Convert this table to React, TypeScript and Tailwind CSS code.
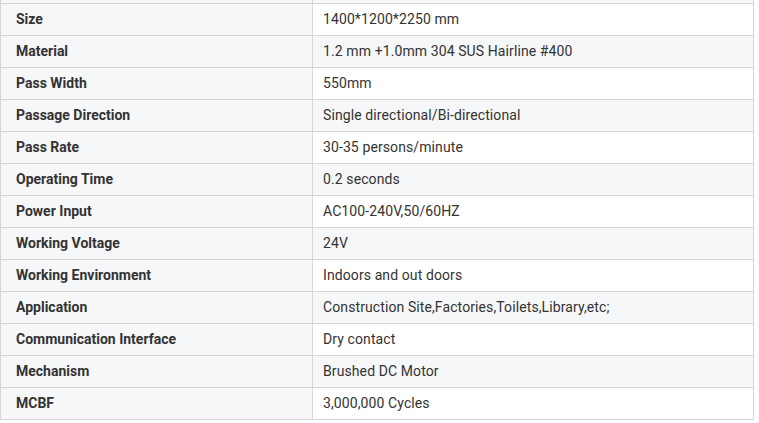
const specs: [string, string][] = [
  ['', ''],
  ['Size', '1400*1200*2250 mm'],
  ['Material', '1.2 mm +1.0mm 304 SUS Hairline #400'],
  ['Pass Width', '550mm'],
  ['Passage Direction', 'Single directional/Bi-directional'],
  ['Pass Rate', '30-35 persons/minute'],
  ['Operating Time', '0.2 seconds'],
  ['Power Input', 'AC100-240V,50/60HZ'],
  ['Working Voltage', '24V'],
  ['Working Environment', 'Indoors and out doors'],
  ['Application', 'Construction Site,Factories,Toilets,Library,etc;'],
  ['Communication Interface', 'Dry contact'],
  ['Mechanism', 'Brushed DC Motor'],
  ['MCBF', '3,000,000 Cycles'],
];

export default function App() {
  return (
    <div className="w-[759px] h-[423px] overflow-hidden bg-white font-['Roboto',sans-serif] text-[14px] text-[#333]">
      {/* first row is scrolled out of view, only its bottom edge shows */}
      <table className="-mt-[29px] w-[754px] border-collapse">
        <tbody>
          {specs.map(([label, value], i) => (
            <tr key={i} className={i % 2 === 0 ? 'bg-[#f6f7f9]' : 'bg-white'}>
              <td className="h-[32px] w-[312px] border border-[#d6d6d6] bg-[#f6f7f9] px-[15px] font-bold">
                {label}
              </td>
              <td className="h-[32px] border border-[#d6d6d6] px-[10px] tracking-[0.1px]">{value}</td>
            </tr>
          ))}
        </tbody>
      </table>
    </div>
  );
}
